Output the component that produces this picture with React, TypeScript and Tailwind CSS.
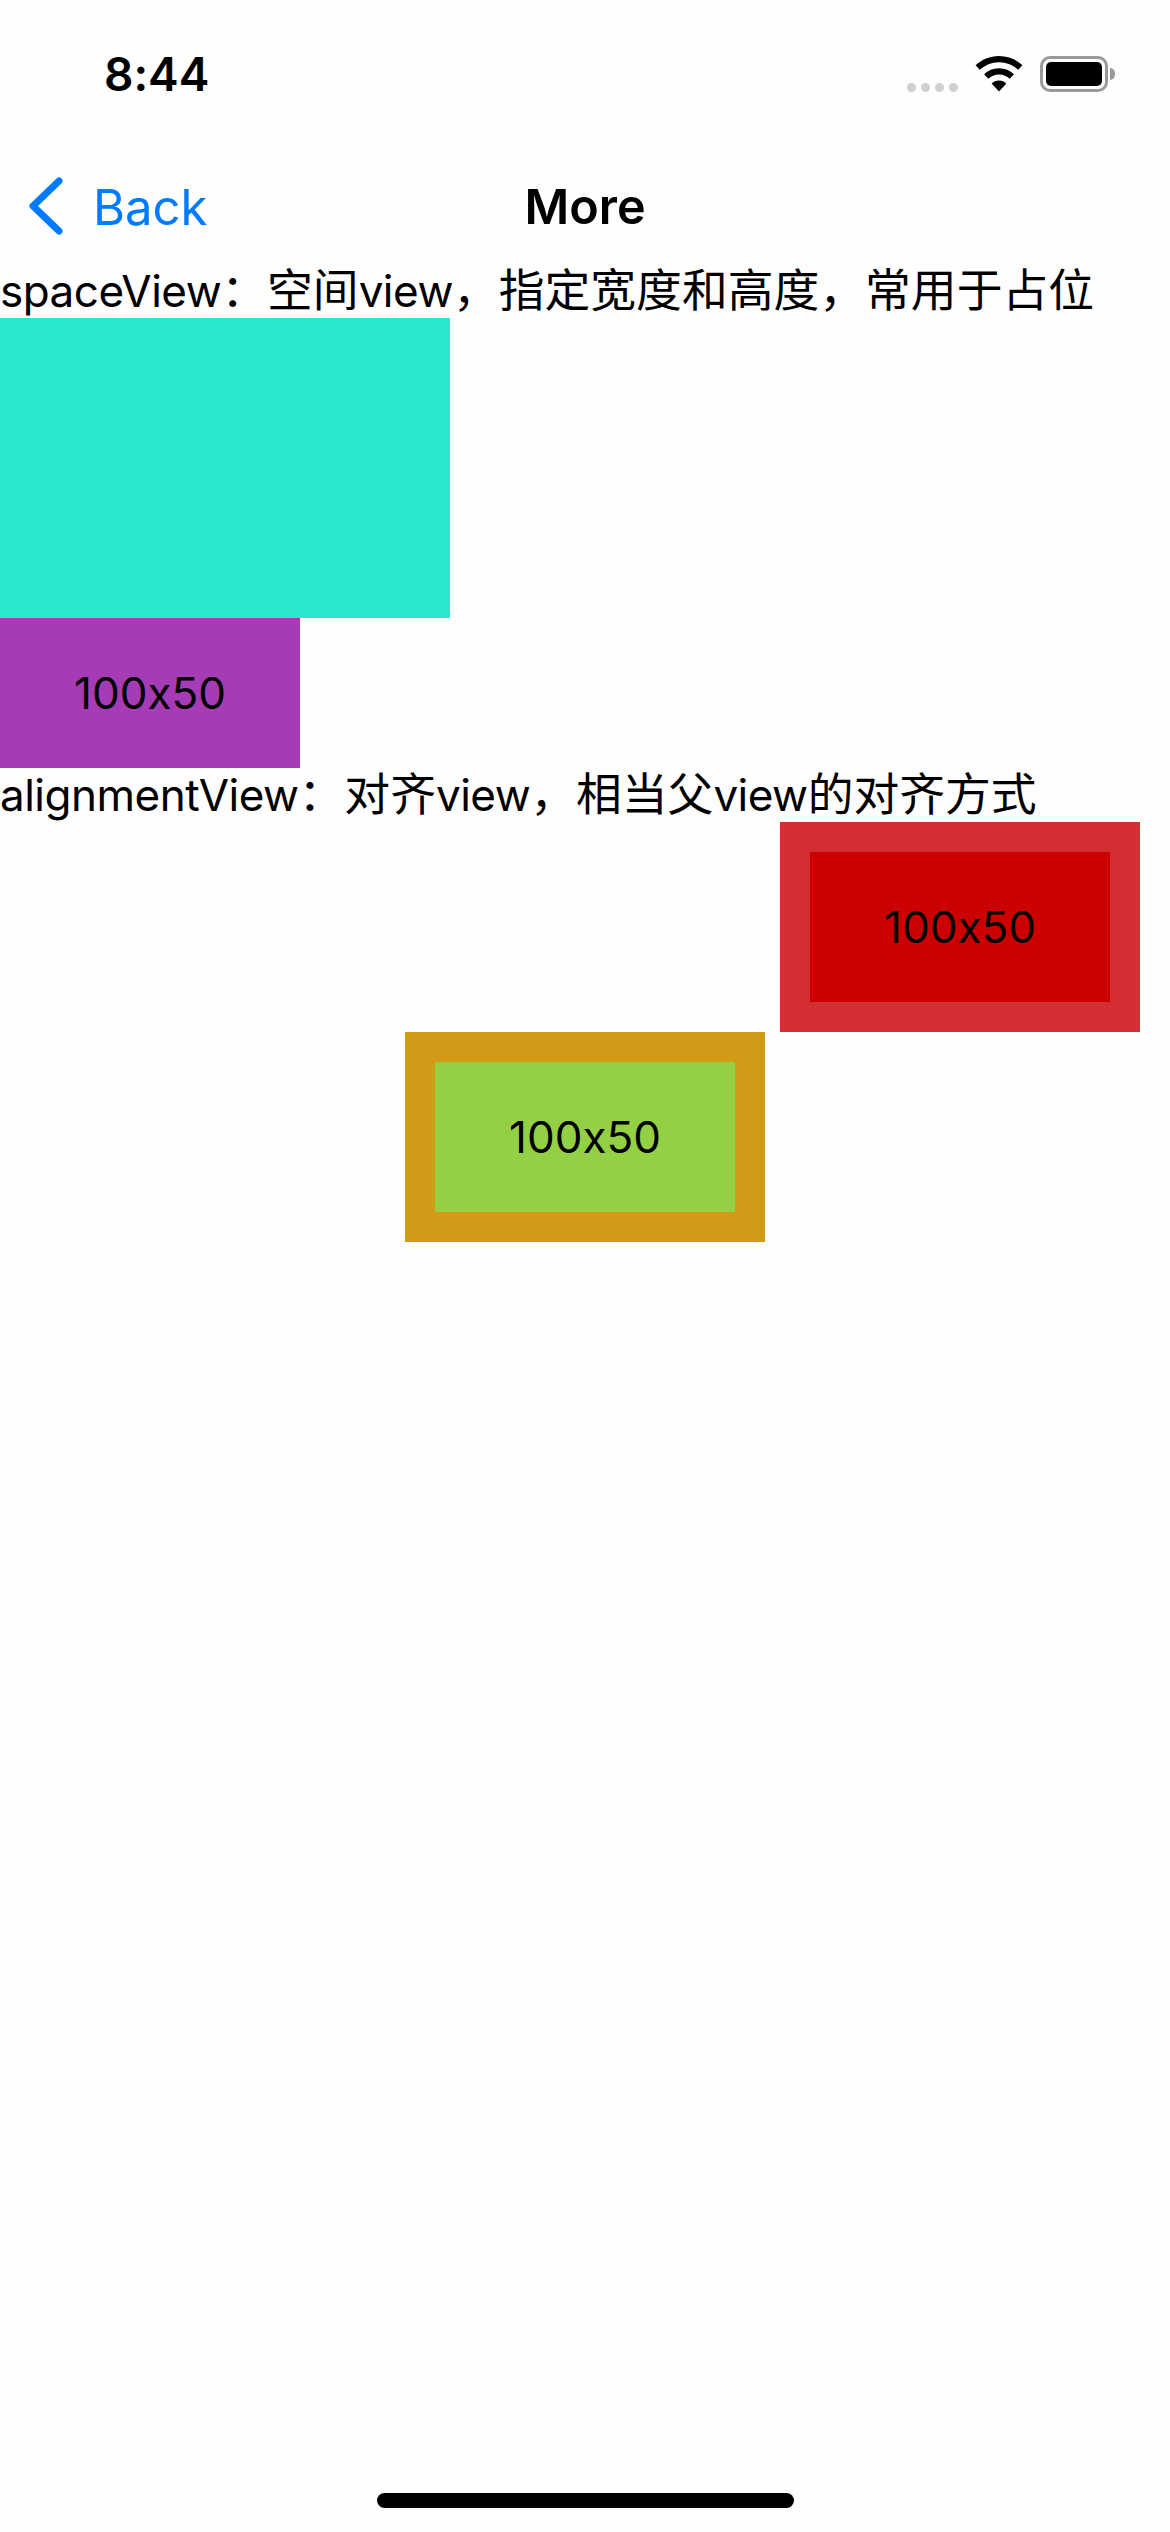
const font = "font-['Inter','Noto_Sans_CJK_SC',sans-serif] [font-feature-settings:'calt'_0]";

// latin runs are a bit smaller than the cjk ones, the reference font is narrower than Inter
const L = ({ children }: { children: string }) => (
  <span className="text-[44px] tracking-[-0.5px]">{children}</span>
);

const Box = ({ className = "" }: { className?: string }) => (
  <div
    className={`flex h-[150px] w-[300px] items-center justify-center text-[44px] leading-[54px] text-black ${className}`}
  >
    100x50
  </div>
);

const Wifi = () => (
  <svg width="48" height="37" viewBox="0 0 50 38" preserveAspectRatio="none" className="block">
    <path
      d="M25 0C15.5 0 7 3.6 0.6 9.6L5 14.2C10.2 9.3 17.2 6.3 25 6.3S39.8 9.3 45 14.2L49.4 9.6C43 3.6 34.5 0 25 0Z"
      fill="#000"
    />
    <path
      d="M25 12.6C19 12.6 13.5 14.9 9.4 18.8L13.9 23.3C16.8 20.6 20.7 18.9 25 18.9S33.2 20.6 36.1 23.3L40.6 18.8C36.5 14.9 31 12.6 25 12.6Z"
      fill="#000"
    />
    <path
      d="M25 25.2C22 25.2 19.3 26.4 17.3 28.2L25 36.5L32.7 28.2C30.7 26.4 28 25.2 25 25.2Z"
      fill="#000"
    />
  </svg>
);

const Battery = () => (
  <div className="flex items-center">
    <div className="h-[36px] w-[68px] rounded-[10px] border-[3px] border-[#9a9a9a] p-[3px]">
      <div className="h-full w-full rounded-[5px] bg-black" />
    </div>
    <div className="ml-[2px] h-[12px] w-[5px] rounded-r-full bg-[#9a9a9a]" />
  </div>
);

const App = () => {
  return (
    <div className={`flex min-h-[2532px] flex-col bg-[#fefefe] ${font}`}>
      <div className="flex h-[132px] items-center justify-between pl-[104px] pr-[55px] pt-[16px]">
        <span className="text-[46px] font-semibold leading-none text-black">8:44</span>
        <div className="flex items-center">
          <div className="mb-[1px] mr-[17px] flex gap-[5px] self-end">
            <span className="h-[9px] w-[9px] rounded-full bg-[#cfcfcf]" />
            <span className="h-[9px] w-[9px] rounded-full bg-[#cfcfcf]" />
            <span className="h-[9px] w-[9px] rounded-full bg-[#cfcfcf]" />
            <span className="h-[9px] w-[9px] rounded-full bg-[#cfcfcf]" />
          </div>
          <div className="mr-[17px]">
            <Wifi />
          </div>
          <Battery />
        </div>
      </div>

      <div className="grid h-[132px] grid-cols-[1fr_auto_1fr] items-center pt-[16px]">
        <div className="flex items-center pl-[29px]">
          <svg width="34" height="58" viewBox="0 0 34 58" fill="none">
            <path
              d="M30 4L4 29L30 54"
              stroke="#007aff"
              strokeWidth="7"
              strokeLinecap="round"
              strokeLinejoin="round"
            />
          </svg>
          <span className="ml-[30px] mt-[2px] text-[49px] leading-none text-[#007aff]">Back</span>
        </div>
        <span className="mt-[2px] text-[48.5px] font-semibold leading-none text-black">More</span>
        <div />
      </div>

      <p className="h-[54px] text-[45.8px] leading-[54px] text-black">
        <L>spaceView</L>：空间<L>view</L>，指定宽度和高度，常用于占位
      </p>
      <div className="h-[300px] w-[450px] bg-[#28e8cf]" />
      <Box className="bg-[#a53bb5]" />

      <p className="h-[54px] text-[45.8px] leading-[54px] text-black">
        <L>alignmentView</L>：对齐<L>view</L>，相当父<L>view</L>的对齐方式
      </p>
      <div className="flex justify-end pr-[30px]">
        <div className="bg-[#d32f33] p-[30px]">
          <Box className="bg-[#cc0000]" />
        </div>
      </div>
      <div className="flex justify-center">
        <div className="bg-[#d39a17] p-[30px]">
          <Box className="bg-[#94d043]" />
        </div>
      </div>

      <div className="mx-auto mb-[24px] mt-auto h-[15px] w-[417px] rounded-full bg-black" />
    </div>
  );
};

export default App;
